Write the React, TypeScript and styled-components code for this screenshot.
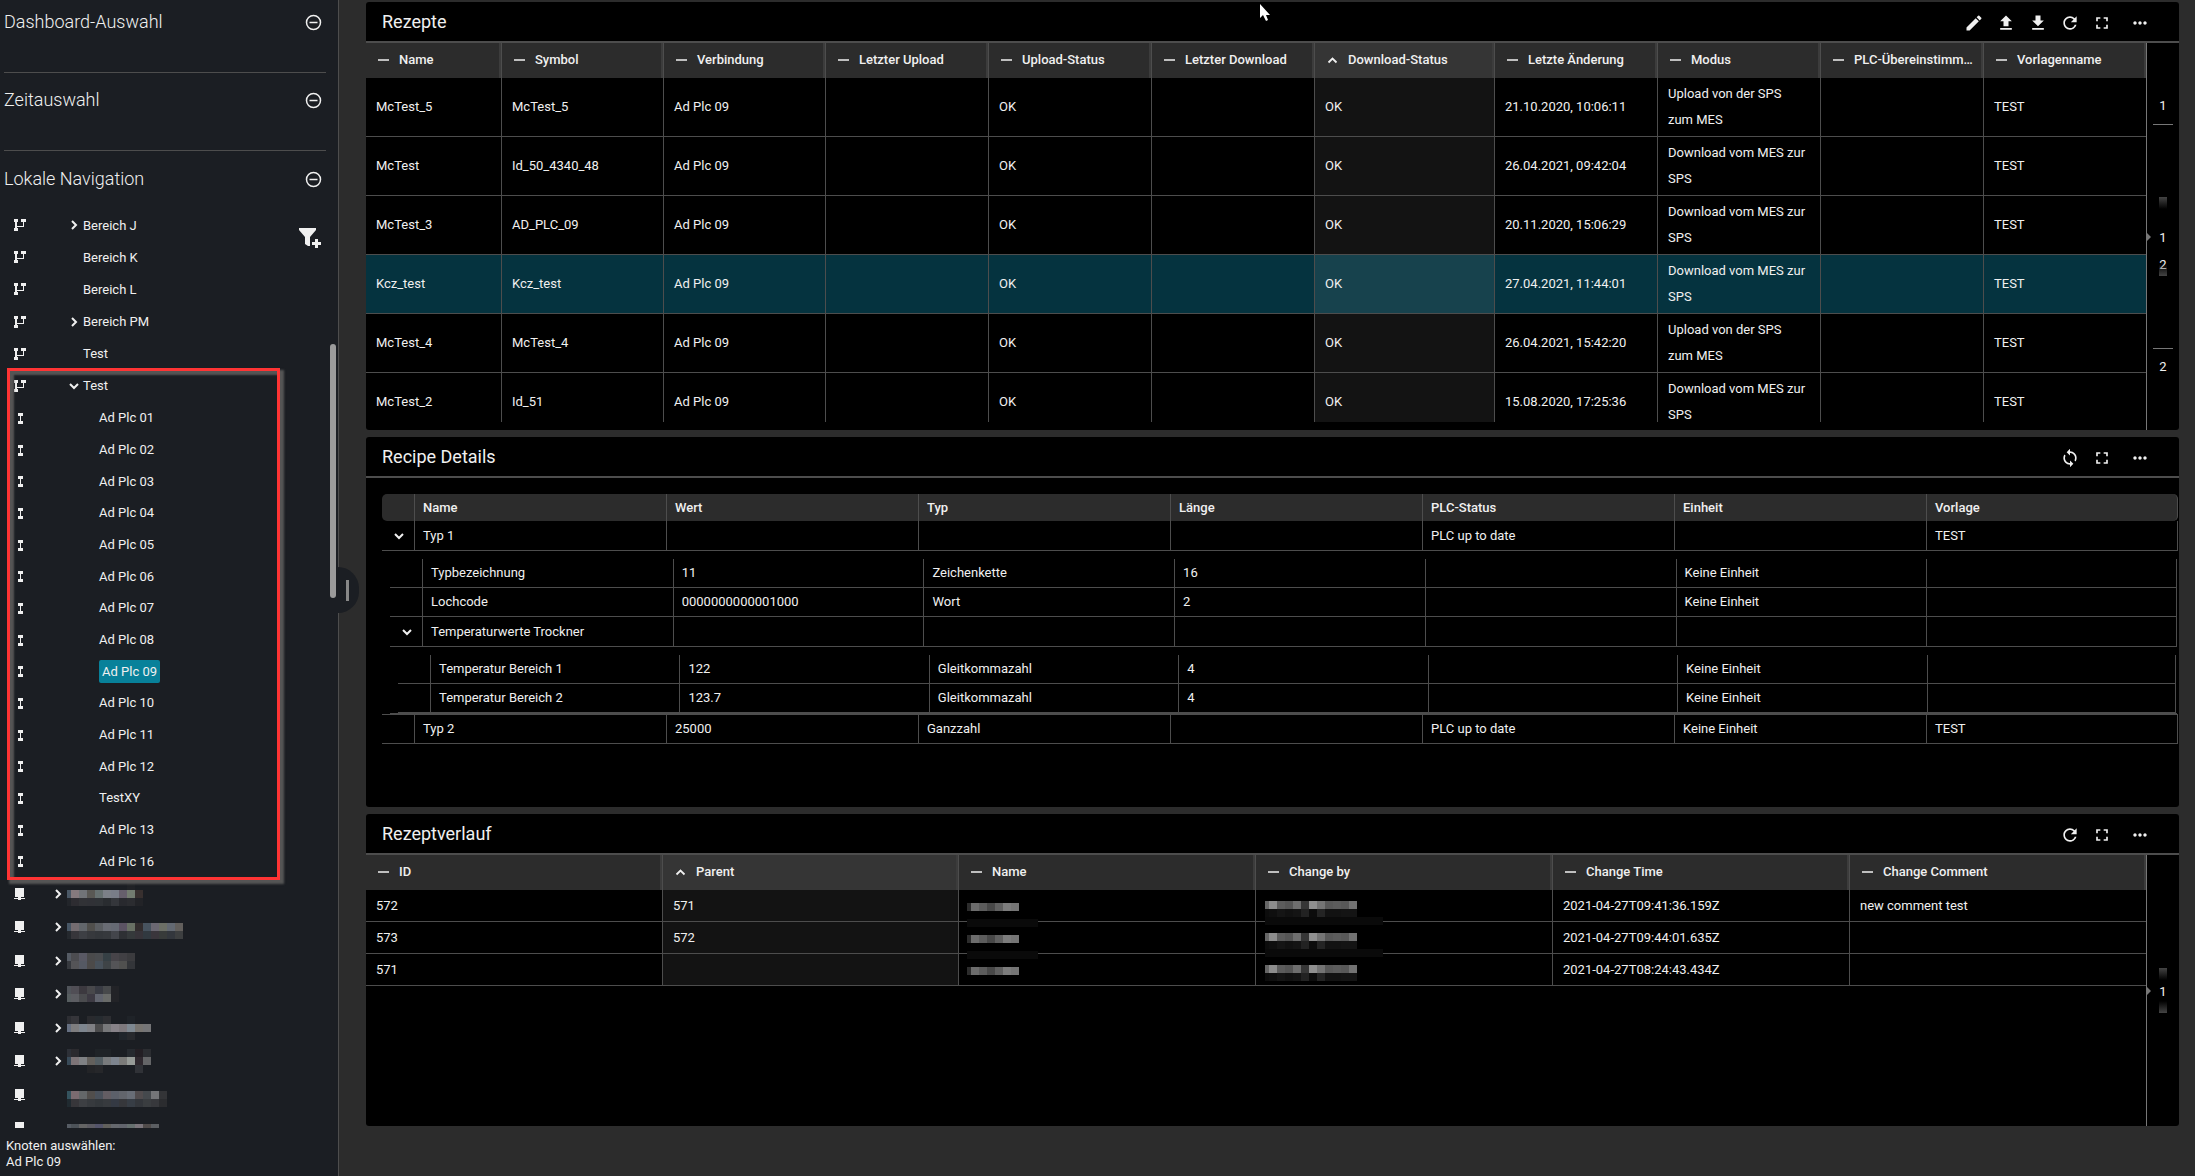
import React from "react";
import styled, { createGlobalStyle } from "styled-components";
import {
  MdEdit,
  MdFileDownload,
  MdFileUpload,
  MdFullscreen,
  MdMoreHoriz,
  MdRefresh,
  MdSync,
} from "react-icons/md";

const line = "#4d4d4d";
const surface = "#2c2c2c";
const ink = "#f0f0f0";

const GlobalStyle = createGlobalStyle`
  *, *::before, *::after { box-sizing: border-box; }
  body {
    margin: 0;
    background: ${surface};
    color: ${ink};
    font: 400 13px/16px Roboto, "Noto Sans", sans-serif;
  }
  button { font: inherit; color: inherit; background: none; border: 0; padding: 0; cursor: pointer; }
  table { border-collapse: separate; border-spacing: 0; table-layout: fixed; width: 100%; }
  th, td { text-align: left; font-weight: 400; padding: 0; }
  h2 { margin: 0; font-size: 18px; line-height: 24px; }
  ul { list-style: none; margin: 0; padding: 0; }
  svg { display: block; }
`;

const Shell = styled.div`
  display: grid;
  grid-template-columns: 339px minmax(0, 1fr);
  height: 100vh;
  min-height: 720px;
  overflow: hidden;
`;

/* ---------- sidebar ---------- */

const Sidebar = styled.aside`
  position: relative;
  display: flex;
  flex-direction: column;
  min-height: 0;
  background: #1b1e23;
  border-right: 1px solid ${line};
`;

const Section = styled.section<{ $height: number; $ruled?: boolean }>`
  flex: none;
  height: ${(p) => p.$height}px;
  margin: 0 12px 0 4px;
  padding: 10px 4px 0 0;
  border-bottom: ${(p) => (p.$ruled ? `1px solid ${line}` : "0")};
`;

const SectionHead = styled.div<{ $gap: number }>`
  display: flex;
  align-items: center;
  justify-content: space-between;
  padding-top: ${(p) => p.$gap}px;

  h2 { font-weight: 300; }
`;

const Tree = styled.nav`
  position: relative;
  flex: 1;
  min-height: 0;
  overflow: hidden;
`;

const TreeGroup = styled.ul<{ $height: number }>`
  display: flex;
  flex-direction: column;
  height: ${(p) => p.$height}px;
`;

const TreeRow = styled.li`
  flex: 1;
  min-height: 0;
  display: flex;
  align-items: center;
  padding-left: 14px;
`;

const TreeButton = styled.button<{ $depth: number }>`
  display: flex;
  align-items: center;
  margin-left: ${(p) => 24 + p.$depth * 16}px;
`;

const Twisty = styled.span`
  display: flex;
  justify-content: center;
  width: 17px;
  padding-right: 1px;
`;

const Label = styled.span<{ $selected?: boolean }>`
  line-height: 23px;
  padding: ${(p) => (p.$selected ? "0 3px" : "0")};
  border-radius: 2px;
  background: ${(p) => (p.$selected ? "#08819a" : "transparent")};
`;

const FilterButton = styled.button`
  position: absolute;
  top: 19px;
  right: 16px;
`;

const ScrollThumb = styled.div`
  position: absolute;
  top: 344px;
  right: 2px;
  width: 6px;
  height: 254px;
  border-radius: 3px;
  background: #9b9b9b;
`;

const Highlight = styled.div`
  position: absolute;
  top: 368px;
  left: 7px;
  width: 273px;
  height: 512px;
  border: 3px solid #ff3434;
  box-shadow: 3px 3px 2px 1px #555, inset 3px 3px 2px 1px #555;
  pointer-events: none;
`;

const DragHandle = styled.button`
  position: absolute;
  top: 567px;
  left: 338px;
  width: 21px;
  height: 46px;
  border-radius: 0 23px 23px 0;
  background: #1b1e23;

  &::after {
    content: "";
    display: block;
    width: 3px;
    height: 21px;
    margin-left: 8px;
    background: #888;
  }
`;

const SidebarFooter = styled.footer`
  flex: none;
  height: 48px;
  padding: 10px 6px 6px;
`;

/* ---------- panels ---------- */

const Main = styled.main`
  display: grid;
  grid-template-rows: minmax(0, 428fr) minmax(0, 370fr) minmax(0, 312fr);
  gap: 7px;
  min-height: 0;
  padding: 2px 16px 50px 27px;
`;

const Panel = styled.section`
  display: flex;
  flex-direction: column;
  min-height: 0;
  overflow: hidden;
  background: #000;
  border-radius: 3px;
`;

const PanelHead = styled.header`
  flex: none;
  display: flex;
  align-items: center;
  justify-content: space-between;
  height: 41px;
  padding: 0 29px 0 16px;
  border-bottom: 2px solid ${line};

  h2 { font-weight: 400; }
`;

const Toolbar = styled.div`
  display: flex;
  gap: 12px;
  padding-top: 2px;

  button:last-child { margin-left: 6px; }
`;

const PanelBody = styled.div`
  flex: 1;
  min-height: 0;
  display: grid;
  grid-template-columns: minmax(0, 1fr) 32px;
`;

const GridViewport = styled.div`
  min-height: 0;
  margin-bottom: 8px;
  overflow: hidden;
`;

const HeadCell = styled.th<{ $sorted?: boolean }>`
  height: 35px;
  background: ${(p) => (p.$sorted ? "#353535" : surface)};
  border-right: 1px solid ${line};
  box-shadow: inset -2px 0 0 #3c3c3c;

  button {
    display: flex;
    align-items: center;
    gap: 9px;
    width: 100%;
    padding: 0 0 2px 10px;
    font-weight: 500;
    text-align: left;
    white-space: nowrap;
  }
  svg { flex: none; }
`;

const Cell = styled.td<{ $sorted?: boolean }>`
  position: relative;
  padding: 2px 12px 2px 10px;
  line-height: 27px;
  border-right: 1px solid ${line};
  border-bottom: 1px solid ${line};
  background: ${(p) => (p.$sorted ? "rgba(255, 255, 255, 0.075)" : "transparent")};

  &:last-child { border-right-color: transparent; }
`;

const Row = styled.tr<{ $active?: boolean }>`
  height: 32px;
  background: ${(p) => (p.$active ? "#05333f" : "transparent")};
`;

const TallRow = styled(Row)`
  height: 59px;

  ${Cell} {
    padding-top: 3px;
    padding-bottom: 3px;
    line-height: 26px;
  }
`;

const Redaction = styled.span<{ $top: number; $left: number }>`
  position: absolute;
  z-index: 1;
  top: ${(p) => p.$top}px;
  left: ${(p) => p.$left}px;
`;

/* ---------- pager ---------- */

const Pager = styled.nav`
  position: relative;
  display: grid;
  grid-template-rows: minmax(0, 1fr) auto minmax(0, 1fr);
  justify-items: center;
  margin-left: -1px;
  border-left: 1px solid #777;
  line-height: 22px;
`;

const PagerEdge = styled.div<{ $end?: boolean }>`
  width: 20px;
  text-align: center;
  margin-top: ${(p) => (p.$end ? 72 : 52)}px;

  button {
    width: 100%;
    padding: ${(p) => (p.$end ? "7px 0 0" : "0 0 7px")};
    border-top: ${(p) => (p.$end ? "1px solid #777" : "0")};
    border-bottom: ${(p) => (p.$end ? "0" : "1px solid #777")};
  }
`;

const PagerPages = styled.div<{ $short?: boolean }>`
  position: relative;
  grid-row: 2;
  display: flex;
  flex-direction: column;
  align-items: center;
  gap: 5px;
  padding: ${(p) => (p.$short ? "13px 0 10px" : "30px 0 0")};

  &::before, &::after {
    content: "";
    position: absolute;
    left: 0;
    right: 0;
    height: 12px;
    pointer-events: none;
  }
  &::before { top: 0; background: linear-gradient(#444, transparent); }
  &::after { bottom: 0; background: linear-gradient(transparent, #444); }
`;

const PagerArrow = styled.span`
  position: absolute;
  top: 50%;
  left: 0;
  margin-top: -4px;
  border: 4px solid transparent;
  border-left-color: #777;
  border-right: 0;
`;

/* ---------- detail table ---------- */

const DetailViewport = styled.div`
  flex: 1;
  min-height: 0;
  overflow: hidden;
  padding: 16px 1px 0 16px;
`;

const DetailHead = styled.th`
  height: 27px;
  padding: 0 8px;
  font-weight: 500;
  background: ${surface};

  & + & { border-left: 1px solid ${line}; }
  &:first-child { border-radius: 5px 0 0 5px; }
  &:last-child { border-radius: 0 5px 5px 0; border-right: 1px solid ${line}; }
`;

const DetailCell = styled.td<{ $parent?: boolean }>`
  height: ${(p) => (p.$parent ? 30 : 29)}px;
  padding: 0 8px;
  border-bottom: 1px solid ${line};

  & + & { border-left: 1px solid ${line}; }
  &:last-child { border-right: 1px solid ${line}; }
`;

const NestedCell = styled.td`
  padding: 8px 1px 0 8px;
  border-bottom: 1px solid ${line};
`;

const ExpandCol = styled.col`
  width: 32px;
`;

const Expander = styled.button`
  display: flex;
  margin-left: 4px;
`;

const Cursor = styled.svg`
  position: absolute;
  top: 4px;
  left: 1260px;
  pointer-events: none;
`;

/* ---------- icons ---------- */

const Chevron = ({ dir }: { dir: "right" | "down" }) => (
  <svg width="10" height="10" viewBox="0 0 10 10" fill="none" stroke={ink} strokeWidth="2">
    <path d={{ right: "M3 1l4 4-4 4", down: "M1 3l4 4 4-4" }[dir]} />
  </svg>
);

const Dash = () => (
  <svg width="14" height="10" viewBox="0 0 14 10">
    <path d="M2 5h11" stroke={ink} strokeWidth="1.4" />
  </svg>
);

const SortUp = () => (
  <svg width="14" height="10" viewBox="0 0 14 10" fill="none" stroke={ink} strokeWidth="1.8">
    <path d="M3.5 7.5l4-4 4 4" />
  </svg>
);

const CircleMinus = () => (
  <svg width="17" height="17" viewBox="0 0 17 17" fill="none" stroke={ink} strokeWidth="1.5">
    <circle cx="8.5" cy="8.5" r="7" />
    <path d="M4.5 8.5h8" />
  </svg>
);

const FilterPlus = () => (
  <svg width="23" height="20" viewBox="0 0 23 20" fill={ink}>
    <path d="M0 0h17v2l-6 7v9H9l-3-2V9L0 2z" />
    <path d="M16 11h3v3h3v3h-3v3h-3v-3h-3v-3h3z" />
  </svg>
);

type NodeKind = "branch" | "plc" | "station";

const NodeIcon = ({ kind }: { kind: NodeKind }) => (
  <svg width="12" height="12" viewBox="0 0 12 12" fill={ink} shapeRendering="crispEdges">
    {kind === "branch" && (
      <path d="M0 0h4v3H3v4h6V3H7V0h5v3h-2v5H3v1h1v3H0V9h1V3H0z" />
    )}
    {kind === "plc" && <path d="M4 1h5v3H7v5h2v3H4V9h2V4H4z" />}
    {kind === "station" && <path d="M1 0h9v9H7v1h4v1H7v1H4v-1H0v-1h4V9H1z" />}
  </svg>
);

/* Obscured text: a half-width first column followed by 8px blocks. */
const Mosaic = ({ rows, bar }: { rows: string[][]; bar?: number }) => {
  const count = Math.max(...rows.map((r) => r.length));
  const width = Math.max(count * 8 - 4, bar ?? 0);
  const height = (rows.length + (bar ? 1 : 0)) * 8;
  return (
    <svg width={width} height={height} shapeRendering="crispEdges" aria-hidden="true">
      {rows.map((row, y) =>
        row.map((fill, x) =>
          fill ? (
            <rect
              key={`${x}-${y}`}
              x={x === 0 ? 0 : x * 8 - 4}
              y={y * 8}
              width={x === 0 ? 4 : 8}
              height={8}
              fill={fill}
            />
          ) : null,
        ),
      )}
      {bar ? <rect x="0" y={rows.length * 8} width={bar} height="8" fill="#0a0a0a" /> : null}
    </svg>
  );
};

/* ---------- data ---------- */

const shades = (s: string) => s.split(" ").map((c) => (c === "-" ? "" : `#${c}`));

type TreeNode = {
  kind: NodeKind;
  depth: number;
  label?: string;
  open?: boolean;
  closed?: boolean;
  selected?: boolean;
  mosaic?: string[][];
};

const areas: TreeNode[] = [
  { kind: "branch", depth: 1, label: "Bereich J", closed: true },
  { kind: "branch", depth: 1, label: "Bereich K" },
  { kind: "branch", depth: 1, label: "Bereich L" },
  { kind: "branch", depth: 1, label: "Bereich PM", closed: true },
  { kind: "branch", depth: 1, label: "Test" },
  { kind: "branch", depth: 1, label: "Test", open: true },
];

const plcs: TreeNode[] = [
  "Ad Plc 01", "Ad Plc 02", "Ad Plc 03", "Ad Plc 04", "Ad Plc 05",
  "Ad Plc 06", "Ad Plc 07", "Ad Plc 08", "Ad Plc 09", "Ad Plc 10",
  "Ad Plc 11", "Ad Plc 12", "TestXY", "Ad Plc 13", "Ad Plc 16",
].map((label) => ({ kind: "plc", depth: 2, label, selected: label === "Ad Plc 09" }));

const stations: TreeNode[] = [
  {
    kind: "station", depth: 0, closed: true,
    mosaic: [
      shades("- - - - - - - - 202226"),
      shades("4a5866 857a7e 717478 595854 667070 7c8088 797d88 665f6c 737c70 38302f"),
      shades("22252a 2d2c31 313236 303136 2f3236 292c30 34363b 28292e 2b2c30 222327"),
    ],
  },
  {
    kind: "station", depth: 0, closed: true,
    mosaic: [
      shades("-"),
      shades("475665 746c70 62666b 504f4c 5b5e62 696c74 666a74 5b5363 687064 322d2e 47535f 6b6872 6c6f66 636972 625f5c"),
      shades("24282d 37363b 3d3f44 37393d 34373b 36393d 43454b 2e3034 35393b 37343a 313940 3a363c 383b3a 33373d 3d3f40"),
    ],
  },
  {
    kind: "station", depth: 0, closed: true,
    mosaic: [
      shades("555b64 4c4c50 595964 4a4a4b 4a4c4f 364045 474449 414044 3b3b3e"),
      shades("36393e 545457 555963 4c4a49 48515a 3f4447 545457 50504f 333539"),
    ],
  },
  {
    kind: "station", depth: 0, closed: true,
    mosaic: [
      shades("50545a 504e55 3c393f 48484b 393b43 47494b 222327"),
      shades("575e60 5c5d62 4a4b4e 3d3a43 61646e 696b69 222327"),
    ],
  },
  {
    kind: "station", depth: 0, closed: true,
    mosaic: [
      shades("2d2e33 35353a - 292a2e 262b30 2d2e32 - - 1f2328"),
      shades("667082 7e7d7f 7d858e 7f8084 4b4b4c 77787a 878288 7e797d 7e8891 787571 757577"),
      shades("- - - - - - - 20252b 27292d"),
    ],
  },
  {
    kind: "station", depth: 0, closed: true,
    mosaic: [
      shades("2d3037 2b2a2e - - 1f2327 1f2327 - - 262a2f 231f24 2b2d31"),
      shades("384a58 7d7477 7f8184 63605c 545e63 787a7c 7d848e 7b7b79 969b97 2f292f 646567"),
      shades("- - - 232427 26272a - - - - 303237"),
    ],
  },
  {
    kind: "station", depth: 0,
    mosaic: [
      shades("-"),
      shades("34535e 7a6b70 646769 514e4c 4a515b 635d63 5c606a 62656c 686d76 514c4e 45494d 747578 333437"),
      shades("202a30 37363a 3d3f43 373a3e 33373b 373a3e 343943 36373b 373d45 33363b 3a3d40 37383c 2b2c2f"),
    ],
  },
  {
    kind: "station", depth: 0,
    mosaic: [
      shades("-"),
      shades("565c64 4c5258 646464 5c5b62 54546a 61605c 65686d 62656d 66706f 7b757b 504b4a 5b5e62"),
      shades("-"),
    ],
  },
];

type Column = { title: string; width: number; sorted?: boolean };

const recipeColumns: Column[] = [
  { title: "Name", width: 136 },
  { title: "Symbol", width: 162 },
  { title: "Verbindung", width: 162 },
  { title: "Letzter Upload", width: 163 },
  { title: "Upload-Status", width: 163 },
  { title: "Letzter Download", width: 163 },
  { title: "Download-Status", width: 180, sorted: true },
  { title: "Letzte Änderung", width: 163 },
  { title: "Modus", width: 163 },
  { title: "PLC-Übereinstimm…", width: 163 },
  { title: "Vorlagenname", width: 163 },
];

const UP = "Upload von der SPS zum MES";
const DOWN = "Download vom MES zur SPS";

const recipes = [
  ["McTest_5", "McTest_5", "21.10.2020, 10:06:11", UP],
  ["McTest", "Id_50_4340_48", "26.04.2021, 09:42:04", DOWN],
  ["McTest_3", "AD_PLC_09", "20.11.2020, 15:06:29", DOWN],
  ["Kcz_test", "Kcz_test", "27.04.2021, 11:44:01", DOWN],
  ["McTest_4", "McTest_4", "26.04.2021, 15:42:20", UP],
  ["McTest_2", "Id_51", "15.08.2020, 17:25:36", DOWN],
].map(([name, symbol, changed, mode]) => [
  name, symbol, "Ad Plc 09", "", "OK", "", "OK", changed, mode, "", "TEST",
]);

const historyColumns: Column[] = [
  { title: "ID", width: 297 },
  { title: "Parent", width: 296, sorted: true },
  { title: "Name", width: 297 },
  { title: "Change by", width: 297 },
  { title: "Change Time", width: 297 },
  { title: "Change Comment", width: 297 },
];

const history = [
  { id: "572", parent: "571", time: "2021-04-27T09:41:36.159Z", comment: "new comment test" },
  { id: "573", parent: "572", time: "2021-04-27T09:44:01.635Z", comment: "" },
  { id: "571", parent: "", time: "2021-04-27T08:24:43.434Z", comment: "" },
];

const nameMosaic = [shades("2c2c2c 6c6c6c 5c5c5c 484848 606060 7c7c7c 757575")];
const userMosaic = [
  shades("666666 8c8c8c 5c5c5c 555555 6e6e6e 363636 8f8f8f 747474 585858 5c5c5c 585858 727272"),
  shades("0c0c0c 0f0f0f 151515 111111 141414 222222 0c0c0c 242424 121212 121212 141414 141414"),
];

type Detail = { cells: string[]; children?: Detail[] };

const detailColumns = ["Name", "Wert", "Typ", "Länge", "PLC-Status", "Einheit", "Vorlage"];

const details: Detail[] = [
  {
    cells: ["Typ 1", "", "", "", "PLC up to date", "", "TEST"],
    children: [
      { cells: ["Typbezeichnung", "11", "Zeichenkette", "16", "", "Keine Einheit", ""] },
      { cells: ["Lochcode", "0000000000001000", "Wort", "2", "", "Keine Einheit", ""] },
      {
        cells: ["Temperaturwerte Trockner", "", "", "", "", "", ""],
        children: [
          { cells: ["Temperatur Bereich 1", "122", "Gleitkommazahl", "4", "", "Keine Einheit", ""] },
          { cells: ["Temperatur Bereich 2", "123.7", "Gleitkommazahl", "4", "", "Keine Einheit", ""] },
        ],
      },
    ],
  },
  { cells: ["Typ 2", "25000", "Ganzzahl", "", "PLC up to date", "Keine Einheit", "TEST"] },
];

/* ---------- composed parts ---------- */

const TreeList = ({ nodes, height }: { nodes: TreeNode[]; height: number }) => (
  <TreeGroup $height={height}>
    {nodes.map((node, i) => (
      <TreeRow key={i}>
        <NodeIcon kind={node.kind} />
        <TreeButton $depth={node.depth} aria-label={node.label ?? "Verborgener Knoten"}>
          <Twisty>
            {node.closed && <Chevron dir="right" />}
            {node.open && <Chevron dir="down" />}
          </Twisty>
          {node.mosaic ? (
            <Mosaic rows={node.mosaic} />
          ) : (
            <Label $selected={node.selected}>{node.label}</Label>
          )}
        </TreeButton>
      </TreeRow>
    ))}
  </TreeGroup>
);

const Columns = ({ columns }: { columns: Column[] }) => (
  <>
    <colgroup>
      {columns.map((c) => (
        <col key={c.title} style={{ width: c.width }} />
      ))}
    </colgroup>
    <thead>
      <tr>
        {columns.map((c) => (
          <HeadCell key={c.title} $sorted={c.sorted}>
            <button>
              {c.sorted ? <SortUp /> : <Dash />}
              <span>{c.title}</span>
            </button>
          </HeadCell>
        ))}
      </tr>
    </thead>
  </>
);

const DetailCols = () => (
  <colgroup>
    <ExpandCol />
    {detailColumns.map((c) => (
      <col key={c} />
    ))}
  </colgroup>
);

const DetailRows = ({ rows }: { rows: Detail[] }) => (
  <tbody>
    {rows.map((row) => (
      <React.Fragment key={row.cells[0]}>
        <tr>
          <DetailCell $parent={!!row.children}>
            {row.children && (
              <Expander aria-label={`${row.cells[0]} zuklappen`}>
                <Chevron dir="down" />
              </Expander>
            )}
          </DetailCell>
          {row.cells.map((text, i) => (
            <DetailCell key={i}>{text}</DetailCell>
          ))}
        </tr>
        {row.children && (
          <tr>
            <NestedCell colSpan={8}>
              <table>
                <DetailCols />
                <DetailRows rows={row.children} />
              </table>
            </NestedCell>
          </tr>
        )}
      </React.Fragment>
    ))}
  </tbody>
);

const tools = {
  edit: ["Bearbeiten", MdEdit],
  upload: ["Hochladen", MdFileUpload],
  download: ["Herunterladen", MdFileDownload],
  refresh: ["Aktualisieren", MdRefresh],
  sync: ["Synchronisieren", MdSync],
  full: ["Vollbild", MdFullscreen],
  more: ["Mehr", MdMoreHoriz],
} as const;

const PanelHeader = ({ title, actions }: { title: string; actions: (keyof typeof tools)[] }) => (
  <PanelHead>
    <h2>{title}</h2>
    <Toolbar>
      {actions.map((a) => {
        const [label, Icon] = tools[a];
        return (
          <button key={a} aria-label={label}>
            <Icon size={20} color={ink} />
          </button>
        );
      })}
    </Toolbar>
  </PanelHead>
);

export default function App() {
  return (
    <Shell>
      <GlobalStyle />
      <Sidebar>
        <Section $height={73} $ruled>
          <SectionHead $gap={0}>
            <h2>Dashboard-Auswahl</h2>
            <button aria-label="Dashboard-Auswahl einklappen"><CircleMinus /></button>
          </SectionHead>
        </Section>
        <Section $height={78} $ruled>
          <SectionHead $gap={5}>
            <h2>Zeitauswahl</h2>
            <button aria-label="Zeitauswahl einklappen"><CircleMinus /></button>
          </SectionHead>
        </Section>
        <Section $height={58}>
          <SectionHead $gap={6}>
            <h2>Lokale Navigation</h2>
            <button aria-label="Lokale Navigation einklappen"><CircleMinus /></button>
          </SectionHead>
        </Section>
        <Tree>
          <TreeList nodes={areas} height={193} />
          <TreeList nodes={plcs} height={475} />
          <TreeList nodes={stations} height={268} />
          <FilterButton aria-label="Filter hinzufügen"><FilterPlus /></FilterButton>
        </Tree>
        <SidebarFooter>
          <div>Knoten auswählen:</div>
          <div>Ad Plc 09</div>
        </SidebarFooter>
        <ScrollThumb />
        <Highlight />
        <DragHandle aria-label="Seitenleiste verschieben" />
      </Sidebar>

      <Main>
        <Panel>
          <PanelHeader
            title="Rezepte"
            actions={["edit", "upload", "download", "refresh", "full", "more"]}
          />
          <PanelBody>
            <GridViewport>
              <table>
                <Columns columns={recipeColumns} />
                <tbody>
                  {recipes.map((cells) => (
                    <TallRow key={cells[0]} $active={cells[0] === "Kcz_test"}>
                      {cells.map((text, i) => (
                        <Cell key={i} $sorted={recipeColumns[i].sorted}>{text}</Cell>
                      ))}
                    </TallRow>
                  ))}
                </tbody>
              </table>
            </GridViewport>
            <Pager aria-label="Seiten der Rezepte">
              <PagerEdge><button>1</button></PagerEdge>
              <PagerPages>
                <button>1</button>
                <button>2</button>
              </PagerPages>
              <PagerEdge $end><button>2</button></PagerEdge>
              <PagerArrow />
            </Pager>
          </PanelBody>
        </Panel>

        <Panel>
          <PanelHeader title="Recipe Details" actions={["sync", "full", "more"]} />
          <DetailViewport>
            <table>
              <DetailCols />
              <thead>
                <tr>
                  <DetailHead />
                  {detailColumns.map((c) => (
                    <DetailHead key={c}>{c}</DetailHead>
                  ))}
                </tr>
              </thead>
              <DetailRows rows={details} />
            </table>
          </DetailViewport>
        </Panel>

        <Panel>
          <PanelHeader title="Rezeptverlauf" actions={["refresh", "full", "more"]} />
          <PanelBody>
            <GridViewport>
              <table>
                <Columns columns={historyColumns} />
                <tbody>
                  {history.map((h, i) => {
                    const last = i === history.length - 1;
                    return (
                      <Row key={h.id}>
                        <Cell>{h.id}</Cell>
                        <Cell $sorted>{h.parent}</Cell>
                        <Cell>
                          <Redaction $top={13} $left={8}>
                            <Mosaic rows={[...nameMosaic, []]} bar={last ? undefined : 71} />
                          </Redaction>
                        </Cell>
                        <Cell>
                          <Redaction $top={11} $left={9}>
                            <Mosaic rows={userMosaic} bar={last ? undefined : 118} />
                          </Redaction>
                        </Cell>
                        <Cell>{h.time}</Cell>
                        <Cell>{h.comment}</Cell>
                      </Row>
                    );
                  })}
                </tbody>
              </table>
            </GridViewport>
            <Pager aria-label="Seiten des Rezeptverlaufs">
              <PagerPages $short><button>1</button></PagerPages>
              <PagerArrow />
            </Pager>
          </PanelBody>
        </Panel>
      </Main>

      <Cursor width="12" height="18" viewBox="0 0 12 18" fill="#fff">
        <path d="M0 0v14l3-3 3 6 2-1-2-5h4z" />
      </Cursor>
    </Shell>
  );
}
